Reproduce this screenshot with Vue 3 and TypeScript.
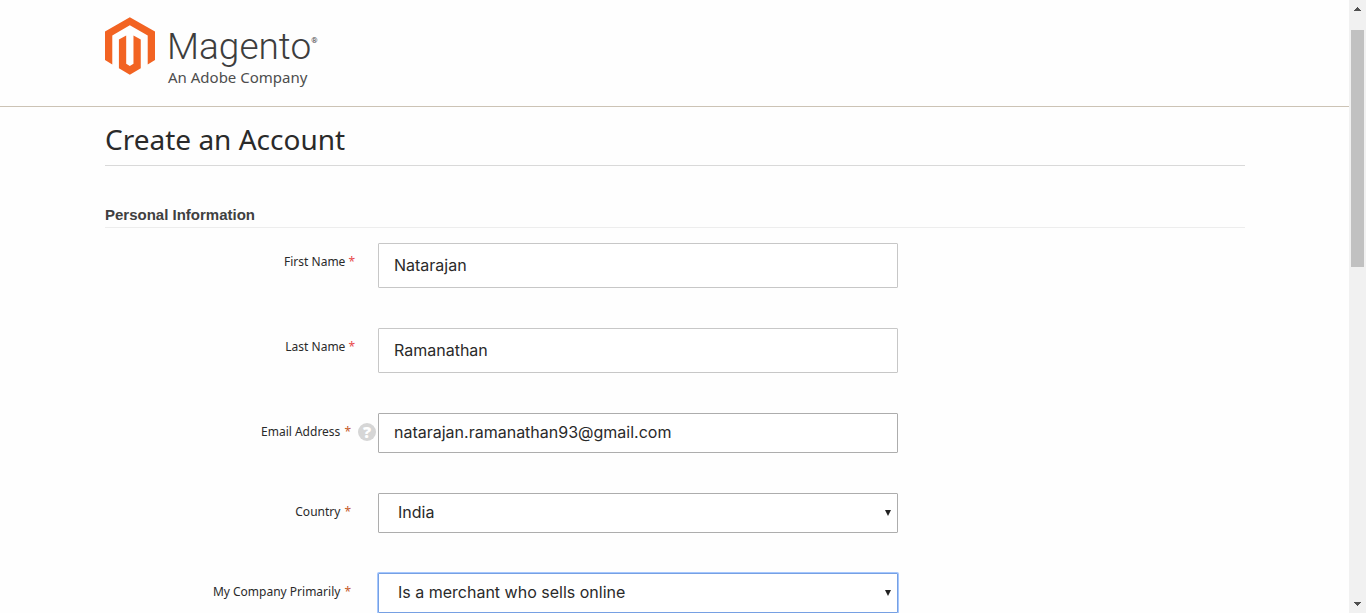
<script setup lang="ts">
import { ref } from 'vue'

interface Field {
  id: string
  label: string
  kind: 'text' | 'email' | 'select'
  value: string
  options?: string[]
  hint?: boolean
  focused?: boolean
}

const fields = ref<Field[]>([
  { id: 'first-name', label: 'First Name', kind: 'text', value: 'Natarajan' },
  { id: 'last-name', label: 'Last Name', kind: 'text', value: 'Ramanathan' },
  { id: 'email', label: 'Email Address', kind: 'email', value: 'natarajan.ramanathan93@gmail.com', hint: true },
  { id: 'country', label: 'Country', kind: 'select', value: 'India', options: ['India'] },
  {
    id: 'company',
    label: 'My Company Primarily',
    kind: 'select',
    value: 'Is a merchant who sells online',
    options: ['Is a merchant who sells online'],
    focused: true,
  },
])
</script>

<template>
  <div class="window">
    <div class="page">
      <header class="site-header">
        <a class="logo" href="#">
          <svg class="mark" viewBox="45 52 151 173" aria-hidden="true">
            <path d="M120 52 196 95V181L174 194V107L120 76 67 107V194L45 181V95Z" />
            <path d="M87 119 109 107V192L120 199 131 192V107L153 119V206L120 225 87 206Z" />
          </svg>
          <span class="wordmark">
            <span class="brand">Magento<sup>®</sup></span>
            <span class="tagline">An Adobe Company</span>
          </span>
        </a>
      </header>
      <main class="content">
        <h1>Create an Account</h1>
        <form>
          <h2>Personal Information</h2>
          <div v-for="field in fields" :key="field.id" class="row">
            <div class="caption" :class="[field.kind, { tall: field.kind === 'text' }]">
              <label :for="field.id">{{ field.label }}<span class="required">*</span></label>
              <button v-if="field.hint" class="hint" type="button" aria-label="Help">?</button>
            </div>
            <div class="control">
              <template v-if="field.kind === 'select'">
                <select :id="field.id" v-model="field.value" :class="{ focused: field.focused }">
                  <option v-for="option in field.options" :key="option">{{ option }}</option>
                </select>
                <svg class="arrow" viewBox="0 0 6 6" aria-hidden="true"><path d="M0 0H6L3 6Z" /></svg>
              </template>
              <input v-else :id="field.id" v-model="field.value" :type="field.kind" :class="field.kind" />
            </div>
          </div>
        </form>
      </main>
    </div>
    <div class="scrollbar" aria-hidden="true">
      <svg class="step" viewBox="0 0 7 4"><path d="M3 0H4V1H5V2H6V3H7V4H0V3H1V2H2V1H3Z" /></svg>
      <div class="track"><div class="thumb"></div></div>
      <svg class="step" viewBox="0 0 7 4"><path d="M0 0H7V1H6V2H5V3H4V4H3V3H2V2H1V1H0Z" /></svg>
    </div>
  </div>
</template>

<style>
body {
  margin: 0;
  background: #fefefe;
}
</style>

<style scoped>
.window {
  display: flex;
  height: 100vh;
  overflow: hidden;
  color: #2a2a2a;
  font-family: "Noto Sans", "Open Sans", sans-serif;
}

.page {
  flex: 1;
  overflow: hidden;
}

.site-header {
  display: flex;
  box-sizing: border-box;
  height: 107px;
  padding: 17px 105px 0;
  border-bottom: 1px solid #ccc3b5;
}

.logo {
  display: flex;
  align-items: flex-start;
  gap: 12px;
  height: 72px;
  color: #4d4d4d;
  text-decoration: none;
}

.mark {
  width: 50px;
  height: 58px;
  fill: #f26322;
}

.wordmark {
  display: flex;
  flex-direction: column;
}

.brand {
  height: 47px;
  padding-top: 4px;
  color: #3d3d3d;
  font: 300 37px/52px Roboto, sans-serif;
}

.brand sup {
  font-size: 8px;
  font-weight: 400;
  line-height: 8px;
  vertical-align: 16px;
}

.tagline {
  padding-left: 1px;
  font-size: 15px;
  line-height: 18px;
}

.content {
  padding: 13px 104px 0 105px;
}

h1 {
  margin: 0;
  padding-bottom: 7px;
  border-bottom: 1px solid #d9d9d9;
  font-size: 28px;
  font-weight: 400;
  line-height: 38px;
}

h2 {
  margin: 40px 0 15px;
  padding-bottom: 3px;
  border-bottom: 1px solid #ededed;
  color: #404040;
  font: 700 15px/18px "Liberation Sans", Arial, sans-serif;
}

.row {
  display: flex;
  align-items: flex-start;
  margin-bottom: 40px;
}

.caption {
  display: flex;
  box-sizing: border-box;
  justify-content: flex-end;
  align-items: center;
  width: 273px;
  height: 38px;
  padding-right: 27px;
  font-size: 12px;
  line-height: 18px;
}

.caption.tall {
  padding-right: 23px;
}

.caption.email {
  padding-right: 2px;
}

.required {
  margin-left: 4px;
  color: #c65b2c;
}

.tall .required {
  margin-left: 3px;
  color: #e8494b;
}

.hint {
  width: 18px;
  height: 18px;
  margin-left: 7px;
  padding: 0;
  border: 0;
  border-radius: 50%;
  background: #d6d6d6;
  color: #fff;
  font: 800 16px/18px "Open Sans", sans-serif;
}

.control {
  display: flex;
  position: relative;
  flex: 0 1 520px;
}

input,
select {
  box-sizing: border-box;
  width: 100%;
  height: 40px;
  margin: 0;
  padding: 0 15px 2px;
  border: 1px solid #adadad;
  border-radius: 1px;
  outline: 0;
  background: #fff;
  color: #2a2a2a;
  font: 400 16px/24px Inter, sans-serif;
  appearance: none;
}

input.text {
  height: 45px;
  border-color: #c7c7c7;
}

select {
  padding: 0 19px 2px;
}

select.focused {
  border-color: #76a0e3;
  box-shadow: 0 0 0 1px #a5c7fe;
}

.arrow {
  position: absolute;
  top: 17px;
  right: 7px;
  width: 6px;
  height: 6px;
  fill: #222;
  pointer-events: none;
}

.scrollbar {
  display: flex;
  box-sizing: border-box;
  flex-direction: column;
  align-items: center;
  width: 17px;
  padding: 7px 0;
  background: #f1f1f1;
}

.step {
  width: 7px;
  height: 4px;
  fill: #505050;
}

.track {
  flex: 1;
  width: 13px;
  padding-top: 19px;
}

.thumb {
  height: 41.4%;
  background: #c1c1c1;
}
</style>
